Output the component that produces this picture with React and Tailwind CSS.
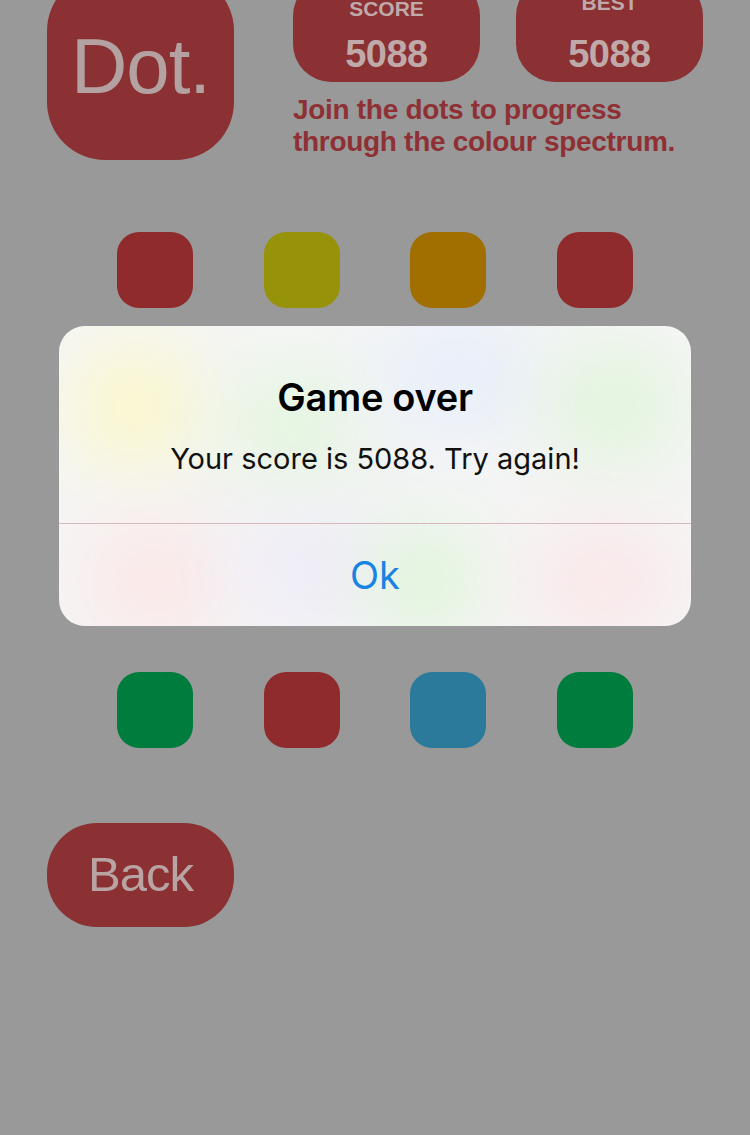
export default function App() {
  const rows = [
    ['bg-[#8f2b2c]', 'bg-[#96920a]', 'bg-[#a06f00]', 'bg-[#8f2b2c]'],
    ['bg-[#96920a]', 'bg-[#007c3c]', 'bg-[#2b7a9c]', 'bg-[#007c3c]'],
    ['bg-[#8f2b2c]', 'bg-[#2b7a9c]', 'bg-[#007c3c]', 'bg-[#8f2b2c]'],
    ['bg-[#007c3c]', 'bg-[#8f2b2c]', 'bg-[#2b7a9c]', 'bg-[#007c3c]'],
  ];

  return (
    <div className="relative w-[750px] h-[1135px] overflow-hidden bg-[#999999] font-['Liberation_Sans',Arial,sans-serif]">
      {/* header */}
      <div className="flex pl-[47px]">
        <div className="w-[187px] h-[187px] -mt-[27px] rounded-[58px] bg-[#8b3033] flex items-center justify-center">
          <span className="text-[78px] font-light text-[#b4a2a2] tracking-[-1px]">Dot.</span>
        </div>
        <div className="ml-[59px] flex flex-col">
          <div className="flex gap-[36px]">
            {['SCORE', 'BEST'].map((label, i) => (
              <div
                key={label}
                className={`w-[187px] h-[104px] -mt-[22px] rounded-[38px] bg-[#8b3033] flex flex-col items-center ${i === 1 ? 'pt-[14px]' : 'pt-[20px]'}`}
              >
                <span className="text-[21px] font-bold leading-none text-[#bfa9a9]">{label}</span>
                <span className={`text-[38px] font-bold leading-none text-[#bfa9a9] tracking-[-0.5px] ${i === 1 ? 'mt-[22px]' : 'mt-[16px]'}`}>5088</span>
              </div>
            ))}
          </div>
          <p className="mt-[12px] text-[28px] font-bold leading-[32px] text-[#8e3034] tracking-[-0.3px]">
            Join the dots to progress
            <br />
            through the colour spectrum.
          </p>
        </div>
      </div>

      {/* dots */}
      <div className="mt-[72px] pl-[117px] grid grid-cols-[repeat(4,76px)] gap-[70.5px]">
        {rows.flat().map((c, i) => (
          <div key={i} className={`w-[76px] h-[76px] rounded-[22px] ${c}`} />
        ))}
      </div>

      <div className="mt-[75px] ml-[47px] w-[187px] h-[104px] rounded-[50px] bg-[#8b3033] flex items-center justify-center">
        <span className="text-[49px] font-light text-[#b9a4a4] tracking-[-1px]">Back</span>
      </div>

      {/* alert */}
      <div className="absolute left-[59px] top-[326px] w-[632px] h-[300px] rounded-[26px] overflow-hidden bg-[#f6f6f6] flex flex-col font-['Inter',sans-serif]">
        {/* soft colour glow from dots behind */}
        <div className="absolute left-[10px] top-[20px] w-[130px] h-[120px] rounded-full bg-[#fbf7c8] blur-2xl" />
        <div className="absolute left-[170px] top-[40px] w-[130px] h-[120px] rounded-full bg-[#e2f5dd] blur-2xl" />
        <div className="absolute left-[320px] top-[-10px] w-[160px] h-[120px] rounded-full bg-[#e7eefa] blur-2xl" />
        <div className="absolute left-[490px] top-[20px] w-[130px] h-[120px] rounded-full bg-[#dff4d9] blur-2xl" />
        <div className="absolute left-[20px] top-[200px] w-[150px] h-[110px] rounded-full bg-[#fbe6e6] blur-2xl" />
        <div className="absolute left-[180px] top-[190px] w-[150px] h-[110px] rounded-full bg-[#eeebf8] blur-2xl" />
        <div className="absolute left-[310px] top-[200px] w-[110px] h-[110px] rounded-full bg-[#dcf5d6] blur-2xl" />
        <div className="absolute left-[470px] top-[200px] w-[150px] h-[110px] rounded-full bg-[#fae6e8] blur-2xl" />

        <div className="relative h-[197px] flex flex-col items-center pt-[52px]">
          <h2 className="text-[38px] font-semibold leading-none text-black tracking-[-0.3px]">Game over</h2>
          <p className="mt-[28px] text-[29px] leading-none text-[#111]">Your score is 5088. Try again!</p>
        </div>
        <div className="relative h-px bg-[#d7b9bd]" />
        <button className="relative flex-1 flex items-center justify-center text-[38px] text-[#1a82e2]">Ok</button>
      </div>
    </div>
  );
}
